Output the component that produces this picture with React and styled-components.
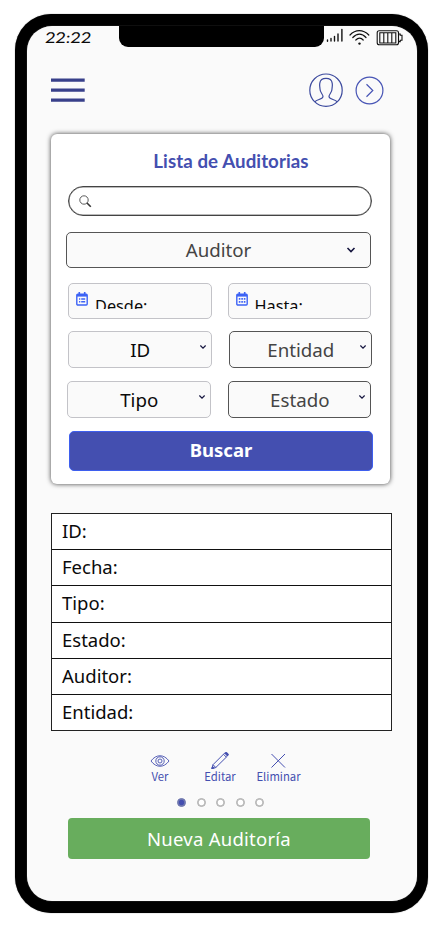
import React from "react";
import styled, { createGlobalStyle } from "styled-components";

const Global = createGlobalStyle`
  * { box-sizing: border-box; }
  body { margin: 0; background: #fff; font-family: "Noto Sans", "Open Sans", sans-serif; color: #0a0a0a; }
  button { font: inherit; margin: 0; padding: 0; border: 0; background: none; color: inherit; }
  svg { display: block; flex: none; }
`;

const Stage = styled.main`
  width: 440px;
  height: 932px;
  padding: 14px 0 0 15px;
  overflow: hidden;
`;

const Phone = styled.div`
  width: 413px;
  height: 899px;
  padding: 12px 11.5px;
  border-radius: 36px;
  background: #000;
  box-shadow: 0 0 1px #555;
`;

const Screen = styled.div`
  height: 875px;
  border-radius: 25px;
  background: #fafafa;
  overflow: hidden;
  display: flex;
  flex-direction: column;
  box-shadow: 0 0 1px #999;
`;

const StatusBar = styled.div`
  display: grid;
  grid-template-columns: 92px 205.5px 1fr;
  height: 26px;
  flex: none;
`;

const Clock = styled.span`
  padding-left: 18px;
  font: 400 15px/22px Lato, sans-serif;
  transform: scaleX(1.2) skewX(-4deg);
  transform-origin: 18px 50%;
`;

const Notch = styled.div`
  height: 20.5px;
  background: #000;
  border-radius: 0 0 9px 9px;
`;

const Signals = styled.div`
  display: flex;
`;

const Header = styled.header`
  display: flex;
  align-items: center;
  height: 36px;
  margin: 20px 33px 0 24px;
  color: #3f4faf;
  flex: none;
`;

const IconButton = styled.button`
  margin-left: ${(p) => p.$gap || "0"};
`;

const Card = styled.section`
  width: 339px;
  height: 350px;
  margin: 26px 0 0 24.5px;
  border-radius: 6px;
  background: #fff;
  box-shadow: 0 0 5px rgba(0, 0, 0, 0.75);
  flex: none;
  display: flex;
  flex-direction: column;
`;

const Title = styled.h1`
  margin: 15px 0 0 21px;
  text-align: center;
  font: 700 18.7px/24px Lato, sans-serif;
  letter-spacing: 0.08px;
  color: #444fb0;
`;

const Search = styled.label`
  display: flex;
  align-items: center;
  width: 304px;
  height: 30px;
  margin: 13px 0 0 17px;
  padding-left: 10px;
  border: 1px solid #444;
  border-radius: 15px;
  box-shadow: inset 0 0 0 0.5px #777;
`;

const SearchInput = styled.input`
  flex: 1;
  min-width: 0;
  margin: 0 14px 0 6px;
  border: 0;
  outline: 0;
  background: none;
`;

const FieldRow = styled.div`
  display: flex;
  gap: ${(p) => p.$gap || "16px"};
  margin: ${(p) => p.$margin};
`;

const Field = styled.div`
  display: flex;
  align-items: center;
  width: ${(p) => p.$width || "143.5px"};
  height: ${(p) => p.$height || "37px"};
  border: 1px solid ${(p) => (p.$strong ? "#555" : "#c3c3c8")};
  border-radius: 5px;
  background: #fafafa;
  color: ${(p) => (p.$strong ? "#444" : "#0a0a0a")};
  font-size: 18.7px;
  line-height: 26px;
`;

const FieldText = styled.span`
  flex: 1;
  text-align: center;
  padding-left: ${(p) => p.$shift || "13px"};
`;

const Caret = styled.svg`
  margin: ${(p) => (p.$large ? "0 14px 0 0" : "0 4px 6px 0")};
`;

const DateField = styled(Field)`
  align-items: flex-start;
  padding: 8px 0 0 7px;
  font-size: 16.3px;
`;

const DateText = styled.span`
  height: 14px;
  margin: 3px 0 0 7px;
  overflow: hidden;
  line-height: 23px;
`;

const SearchButton = styled.button`
  width: 304px;
  height: 40px;
  margin: 13px 0 0 18px;
  border: 1px solid #3e5fee;
  border-radius: 5px;
  background: #444fb0;
  color: #fff;
  font-weight: 700;
  font-size: 18.5px;
  line-height: 36px;
  padding-bottom: 2px;
`;

const Table = styled.div`
  width: 341px;
  margin: 29px 0 0 24.5px;
  border: 1px solid #222;
  background: #fff;
  flex: none;
`;

const TableRow = styled.div`
  height: 36.2px;
  padding-left: 10px;
  font-size: 18.5px;
  line-height: 34.2px;
  border-bottom: 1px solid #111;
  &:last-child { border-bottom: 0; height: 35px; }
`;

const Actions = styled.div`
  display: flex;
  height: 33px;
  margin: 21.5px 0 0 113.5px;
  color: #444fb0;
  flex: none;
`;

const Action = styled.button`
  display: flex;
  flex-direction: column;
  align-items: center;
  width: ${(p) => p.$width};
  font-family: "Noto Sans CJK SC", "Noto Sans", sans-serif;
  font-size: 11.3px;
  line-height: 15px;
  white-space: nowrap;
`;

const Pager = styled.div`
  display: flex;
  gap: 10.5px;
  margin: 12.5px 0 0 150.5px;
  flex: none;
`;

const Dot = styled.span`
  width: 9px;
  height: 9px;
  border: 1px solid ${(p) => (p.$active ? "#777faf" : "#aaa")};
  border-radius: 50%;
  background: ${(p) => (p.$active ? "#444fb0" : "#fff")};
  box-shadow: inset 0 0 0 0.8px ${(p) => (p.$active ? "#777faf" : "#bbb")};
`;

const NewButton = styled.button`
  width: 302px;
  height: 41px;
  margin: 11px 0 0 41.5px;
  border-radius: 4px;
  background: #68ad5d;
  color: #fff;
  font-size: 18.5px;
  line-height: 41px;
  letter-spacing: 0.25px;
  flex: none;
`;

const Chevron = ({ large }) => (
  <Caret $large={large} width={large ? 10 : 8} height={large ? 8 : 6} viewBox="0 0 10 8" fill="none" stroke="#16163f" strokeWidth="1.6">
    <path d="M1.5 2 5 5.5 8.5 2" />
  </Caret>
);

const Calendar = ({ list }) => (
  <svg width="12" height="14" viewBox="0 0 12 14" fill="none" stroke="#3d63f5">
    <rect x=".8" y="2.3" width="10.4" height="10.7" rx="1" strokeWidth="1.4" />
    <path d="M1 3.3h10" strokeWidth="2.6" />
    <path d="M3.3 0v3M8.7 0v3" strokeWidth="1.6" />
    {list ? (
      <path d="M3 7h1.3M5.2 7h4M3 9.8h1.3M5.2 9.8h4" strokeWidth="1.4" />
    ) : (
      <path d="M2.8 6.9h6.6M2.8 9.9h6.6" strokeWidth="1.6" strokeDasharray="1.6 .9" />
    )}
  </svg>
);

const Select = ({ text, strong }) => (
  <Field $strong={strong}>
    <FieldText>{text}</FieldText>
    <Chevron />
  </Field>
);

const fields = ["ID:", "Fecha:", "Tipo:", "Estado:", "Auditor:", "Entidad:"];

export default function App() {
  return (
    <Stage>
      <Global />
      <Phone>
        <Screen>
          <StatusBar>
            <Clock>22:22</Clock>
            <Notch />
            <Signals>
              <svg width="82" height="22" viewBox="0 0 82 22" fill="none" stroke="#111" strokeLinecap="round">
                <path d="M3.5 14v1.3M7 12.5v2.5M10.5 10.5v4.5M14 8v7M17.9 3.5V15" strokeWidth="1.4" />
                <path d="M26 9C31.5 3.2 39 3.2 44.8 9M28.8 11.5C33 7 38 7 42 11.5M31.8 14C34.2 11.6 37 11.6 39.2 14" strokeWidth="1.2" />
                <circle cx="35.5" cy="17.6" r="1.2" fill="#111" stroke="none" />
                <rect x="53.2" y="4.7" width="21.3" height="14" rx="2" strokeWidth="1.1" />
                <path d="M74.7 8h1.5v1.2h1.8v5h-1.8v1.4h-1.5" strokeWidth="1.1" />
                <path d="M55.8 6.7h16v10.3h-16zM59.8 6.7V17M63.8 6.7V17M67.8 6.7V17" strokeWidth="1.1" />
              </svg>
            </Signals>
          </StatusBar>
          <Header>
            <IconButton aria-label="Menú">
              <svg width="34" height="24" viewBox="0 0 34 24" fill="#38408a">
                <path d="M0 .5h33.7v3.3H0zM0 10.5h33.7v3.3H0zM0 20.5h33.7v3.3H0z" />
              </svg>
            </IconButton>
            <IconButton aria-label="Perfil" $gap="auto">
              <svg width="34" height="34" viewBox="0 0 34 34" fill="none" stroke="#3c4a9e" strokeWidth="1.2">
                <circle cx="17" cy="17.2" r="16.2" />
                <path d="M5.8 28.8C8 26.2 14 26.4 14 23.4c0-2.2-3-3.6-3-7.4 0-2-.8-2.5-.2-5.9C11.3 6.7 13.7 5.4 17 5.4s5.7 1.3 6.2 4.7c.6 3.4-.2 3.9-.2 5.9 0 3.8-3 5.2-3 7.4 0 3 6 2.8 8.2 5.4" />
              </svg>
            </IconButton>
            <IconButton aria-label="Siguiente" $gap="12px">
              <svg width="29" height="29" viewBox="0 0 29 29" fill="none" stroke="#4754b5" strokeWidth="1.2">
                <circle cx="14.5" cy="14.5" r="13.4" />
                <path d="m11.5 8.3 6.3 6.2-6.3 6.2" />
              </svg>
            </IconButton>
          </Header>

          <Card>
            <Title>Lista de Auditorias</Title>
            <Search>
              <svg width="13" height="13" viewBox="0 0 13 13" fill="none" stroke="#333">
                <circle cx="5" cy="5" r="4.2" strokeWidth=".8" />
                <path d="m8 8 3.8 3.8" strokeWidth="1.6" />
              </svg>
              <SearchInput aria-label="Buscar" />
            </Search>
            <FieldRow $margin="16px 0 0 15px">
              <Field $strong $width="305px" $height="36px">
                <FieldText $shift="24px">Auditor</FieldText>
                <Chevron large />
              </Field>
            </FieldRow>
            <FieldRow $margin="15px 0 0 17px">
              <DateField $height="36px"><Calendar list /><DateText>Desde:</DateText></DateField>
              <DateField $height="36px"><Calendar /><DateText>Hasta:</DateText></DateField>
            </FieldRow>
            <FieldRow $margin="12px 0 0 17px" $gap="17px">
              <Select text="ID" />
              <Select text="Entidad" strong />
            </FieldRow>
            <FieldRow $margin="13px 0 0 16px" $gap="17px">
              <Select text="Tipo" />
              <Select text="Estado" strong />
            </FieldRow>
            <SearchButton>Buscar</SearchButton>
          </Card>

          <Table>
            {fields.map((f) => <TableRow key={f}>{f}</TableRow>)}
          </Table>

          <Actions>
            <Action $width="40px">
              <svg width="20" height="17" viewBox="0 0 20 17" fill="none" stroke="currentColor" strokeWidth=".9">
                <path d="M1 9c5-7 13-7 18 0-5 7-13 7-18 0Z" />
                <circle cx="10" cy="9" r="4.2" />
                <circle cx="10" cy="9" r="2" />
              </svg>
              Ver
            </Action>
            <Action $width="80px">
              <svg width="18" height="17" viewBox="0 0 18 17" fill="none" stroke="currentColor" strokeWidth="1">
                <path d="m.8 16.7 1.2-4L13.5 1.2Q15.5-.2 16.8 1.4q.8 1.3-.5 2.8L4.8 15.5zM2 12.7l2.8 2.8M12.5 2.3l2.8 2.8" />
                <path d="m.8 16.7.7-2.3 1.7 1.5zM13.8 1.2l2.6 2.8.8-1.5-1.6-1.8z" fill="currentColor" />
              </svg>
              Editar
            </Action>
            <Action $width="37px">
              <svg width="16" height="17" viewBox="0 0 16 17" fill="none" stroke="currentColor" strokeWidth="1">
                <path d="m.5 2 13.5 13.5M14 2 .5 15.5" />
              </svg>
              Eliminar
            </Action>
          </Actions>
          <Pager>
            {[0, 1, 2, 3, 4].map((i) => <Dot key={i} $active={i === 0} />)}
          </Pager>
          <NewButton>Nueva Auditoría</NewButton>
        </Screen>
      </Phone>
    </Stage>
  );
}
